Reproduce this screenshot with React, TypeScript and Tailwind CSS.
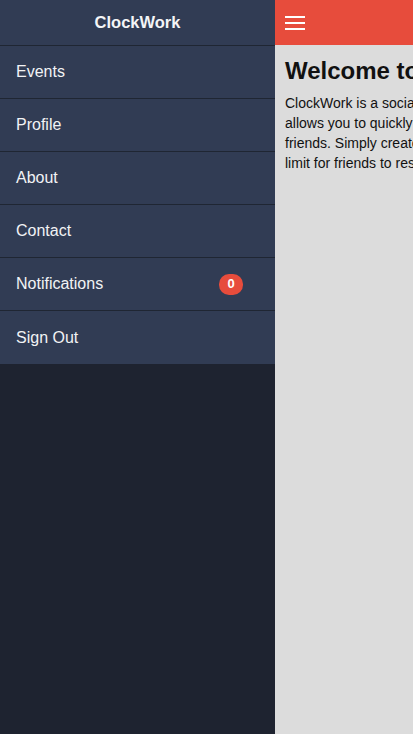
import React from 'react';

const menuItems = ['Events', 'Profile', 'About', 'Contact', 'Notifications', 'Sign Out'];

// lines of the intro, wrapped as the page shows them
const intro = [
  'ClockWork is a social event planning app that',
  'allows you to quickly organize events with your',
  'friends. Simply create an event and set a time',
  'limit for friends to respond.',
];

export default function App() {
  const notifications = 0;

  return (
    <div
      className="relative h-[734px] w-[413px] overflow-hidden bg-[#1e2330]"
      style={{ fontFamily: '"Liberation Sans", Arial, sans-serif' }}
    >
      <div className="flex h-full">
        {/* Side menu */}
        <nav className="flex h-full w-[275px] shrink-0 flex-col bg-[#1e2330]">
          <div className="flex h-[46px] items-center justify-center border-b border-[#1f2633] bg-[#313c54] text-[16.5px] font-bold text-[#f4f5f7]">
            ClockWork
          </div>
          <ul className="bg-[#313c54]">
            {menuItems.map((item, i) => (
              <li
                key={item}
                className={
                  'flex h-[53px] items-center justify-between pl-4 pr-8 text-[16px] text-[#f2f3f5] ' +
                  (i < menuItems.length - 1 ? 'border-b border-[#1f2633]' : '')
                }
              >
                <span>{item}</span>
                {item === 'Notifications' && (
                  <span className="flex h-[21px] w-[24px] items-center justify-center rounded-[10px] bg-[#e74c3c] text-[13px] font-bold text-white">
                    {notifications}
                  </span>
                )}
              </li>
            ))}
          </ul>
        </nav>

        {/* Main content, pushed aside by the menu */}
        <main className="h-full w-[413px] shrink-0 bg-[#dcdcdc]">
          <header className="flex h-[45px] items-center bg-[#e74c3c] px-[10px]">
            <button className="flex w-[20px] flex-col gap-[4px]">
              <span className="block h-[2px] w-full bg-white" />
              <span className="block h-[2px] w-full bg-white" />
              <span className="block h-[2px] w-full bg-white" />
            </button>
          </header>
          <div className="px-[10px] pt-[11px]">
            <h1 className="whitespace-nowrap text-[24px] font-bold leading-[30px] text-[#111]">Welcome to ClockWork</h1>
            <p className="mt-[7px] text-[14px] leading-[20px] text-[#111]">
              {intro.map((line) => (
                <span key={line} className="block whitespace-nowrap">
                  {line}
                </span>
              ))}
            </p>
          </div>
        </main>
      </div>
    </div>
  );
}
